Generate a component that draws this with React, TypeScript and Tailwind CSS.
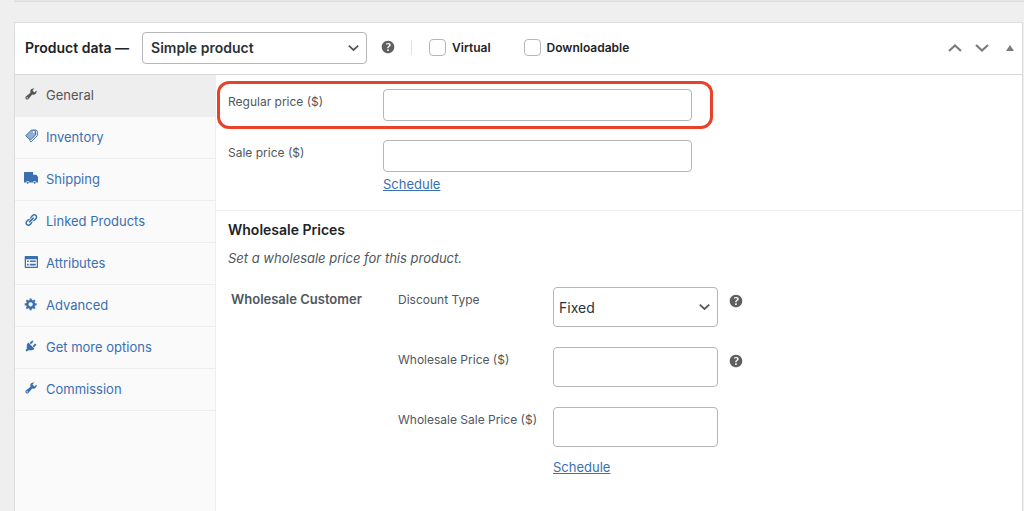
import React from "react";

const WRENCH =
  "M16.68 9.77c-1.34 1.34-3.3 1.67-4.95.99l-5.41 6.52c-.99.99-2.59.99-3.58 0s-.99-2.59 0-3.57l6.52-5.42c-.68-1.65-.35-3.61.99-4.95 1.28-1.28 3.12-1.62 4.72-1.06l-2.89 2.89 2.82 2.82 2.86-2.87c.53 1.58.18 3.39-1.08 4.65zM3.81 16.21c.4.39 1.04.39 1.43 0 .4-.4.4-1.04 0-1.43-.39-.4-1.03-.4-1.43 0-.39.39-.39 1.03 0 1.43z";

const tabs = [
  { name: "General", active: true, icon: <path d={WRENCH} /> },
  {
    name: "Inventory",
    icon: (
      <>
        <path d="M10.500 1.500H15L16.500 3v5.500L9 16 2.500 9.500z" opacity=".55" />
        <path
          d="M10.500 1.500H15L16.500 3v5.500L9 16 2.500 9.500zM15 1.500h2.500L19 3v6.500L10 18.500l-2-2"
          fill="none"
          stroke="currentColor"
          strokeWidth="1.400"
        />
        <circle cx="14" cy="4.300" r="1.300" fill="#fafafa" />
      </>
    ),
  },
  {
    name: "Shipping",
    icon: (
      <>
        <path d="M.5 1.500h12.500v3.800h4.700L20 8.500v8h-2.500a2.300 2.300 0 0 0-4.600 0H7.500a2.300 2.300 0 0 0-4.600 0H0V2z" />
        <circle cx="5.200" cy="16.800" r="1.500" />
        <circle cx="15.200" cy="16.800" r="1.500" />
      </>
    ),
  },
  {
    name: "Linked Products",
    icon: (
      <path d="M17.74 2.76c1.68 1.69 1.68 4.41 0 6.1l-1.53 1.52c-1.12 1.12-2.7 1.47-4.14 1.09l2.62-2.61.76-.77.76-.76c.84-.84.84-2.2 0-3.04-.84-.85-2.2-.85-3.04 0l-.77.76-3.38 3.38c-.37-1.44-.02-3.02 1.1-4.14l1.52-1.53c1.69-1.68 4.42-1.68 6.1 0zM8.59 13.43l5.34-5.34c.42-.42.42-1.1 0-1.52-.44-.43-1.13-.39-1.53 0l-5.33 5.34c-.42.42-.42 1.1 0 1.52.44.43 1.13.39 1.52 0zm-.76 2.29l4.14-4.15c.38 1.44.03 3.02-1.09 4.14l-1.52 1.53c-1.69 1.68-4.41 1.68-6.1 0-1.68-1.68-1.68-4.42 0-6.1l1.53-1.52c1.12-1.12 2.7-1.47 4.14-1.1l-4.14 4.15c-.85.84-.85 2.2 0 3.05.84.84 2.2.84 3.04 0z" />
    ),
  },
  {
    name: "Attributes",
    icon: (
      <path
        fillRule="evenodd"
        d="M2 1.500h17a1 1 0 0 1 1 1v15a1 1 0 0 1-1 1H2a1 1 0 0 1-1-1v-15a1 1 0 0 1 1-1zm.8 4.500v10.800h15.400V6zM4.300 7.800h2.400v2.300H4.300zm4 0h8.500v2.300H8.300zm-4 4.800h2.400v2.300H4.300zm4 0h8.500v2.300H8.300z"
      />
    ),
  },
  {
    name: "Advanced",
    icon: (
      <path d="M18 12h-2.180c-.17.7-.44 1.350-.81 1.930l1.540 1.540-2.100 2.100-1.540-1.540c-.58.36-1.230.63-1.910.79V19H8v-2.180c-.68-.16-1.330-.43-1.910-.79l-1.540 1.540-2.120-2.120 1.540-1.540c-.36-.58-.63-1.230-.79-1.910H1V9.030h2.170c.16-.7.44-1.350.8-1.940L2.430 5.550l2.100-2.100 1.540 1.540c.58-.37 1.240-.64 1.930-.81V2h3v2.180c.68.16 1.330.43 1.910.79l1.540-1.540 2.120 2.120-1.540 1.540c.36.59.64 1.240.8 1.940H18V12zm-8.500 1.500c1.660 0 3-1.340 3-3s-1.340-3-3-3-3 1.340-3 3 1.340 3 3 3z" />
    ),
  },
  {
    name: "Get more options",
    icon: (
      <path d="M13.11 4.36L9.87 7.6 8 5.73l3.24-3.24c.35-.34 1.05-.2 1.56.32.52.51.66 1.21.31 1.55zm-8 1.77l.91-1.12 9.01 9.01-1.19.84c-.71.71-2.63 1.16-3.82 1.16H6.14L4.9 17.26c-.59.59-1.54.59-2.12 0-.59-.58-.59-1.53 0-2.12l1.24-1.24v-3.88c0-1.13.4-3.19 1.09-3.89zm7.26 3.97l3.24-3.24c.34-.35 1.04-.21 1.55.31.52.51.66 1.21.31 1.55l-3.24 3.25z" />
    ),
  },
  { name: "Commission", icon: <path d={WRENCH} /> },
];

const INPUT = "block rounded-[4px] border border-[#b4b6b9] bg-white px-2 outline-none";

const HelpTip = () => (
  <svg viewBox="0 0 20 20" className="h-[18px] w-[18px] shrink-0 fill-[#5f5f5f]" role="img">
    <path d="M17 10c0-3.870-3.140-7-7-7-3.870 0-7 3.130-7 7s3.130 7 7 7c3.860 0 7-3.130 7-7zm-6.300 1.480H9.140v-.43c0-.38.08-.7.24-.98s.46-.57.88-.89c.41-.29.68-.53.81-.71.14-.18.2-.39.2-.62 0-.25-.09-.44-.28-.58-.19-.13-.45-.19-.79-.19-.58 0-1.250.15-2 .46l-.64-1.280c.87-.49 1.800-.74 2.770-.74.81 0 1.450.2 1.920.58.48.39.71.91.71 1.550 0 .43-.09.8-.29 1.110-.19.32-.57.67-1.110 1.060-.38.28-.61.49-.71.63-.1.15-.15.34-.15.57v.35zm-1.470 2.740c-.18-.17-.27-.42-.27-.73 0-.33.08-.58.26-.75s.43-.25.77-.25c.32 0 .57.09.75.26s.27.42.27.74c0 .3-.09.55-.27.72-.18.18-.43.27-.75.27-.33 0-.58-.09-.76-.26z" />
  </svg>
);

const Chevron = ({ className, up }: { className?: string; up?: boolean }) => (
  <svg viewBox="0 0 14 8" className={className} fill="none" stroke="currentColor" strokeWidth="2.200">
    <path d={up ? "M1 7l6-5.500L13 7" : "M1 1l6 5.500L13 1"} />
  </svg>
);

const Select = ({ id, value, className }: { id: string; value: string; className: string }) => (
  <div className="relative">
    <select id={id} defaultValue={value} className={`${INPUT} appearance-none text-[#2c3338] ${className}`}>
      <option>{value}</option>
    </select>
    <Chevron className="pointer-events-none absolute top-1/2 right-2 h-[7px] w-[11px] -translate-y-1/2 text-[#555]" />
  </div>
);

const Check = ({ label }: { label: string }) => (
  <label className="flex items-center gap-[6px] text-[12px] font-semibold">
    <input
      type="checkbox"
      className="h-[17px] w-[17px] appearance-none rounded-[4px] border border-[#b4b6b9] bg-white"
    />
    {label}
  </label>
);

const App = () => {
  return (
    <div className="min-h-screen bg-[#efefef] font-[Inter,'Liberation_Sans',sans-serif] text-[#1d2327]">
      <div className="ml-[14px] h-[2px] border-b border-[#dcdcde] bg-[#e6e6e6]" />

      <div className="mt-5 mr-px ml-[14px] flex min-h-[calc(100vh-22px)] flex-col border border-b-0 border-[#dcdcde] bg-white">
        {/* Header */}
        <header className="flex h-[52px] items-center border-b border-[#d5d6d9] pr-2 pb-[2px] pl-[10px]">
          <label htmlFor="product-type" className="text-[14px] font-semibold">
            Product data —
          </label>
          <div className="ml-[13px]">
            <Select id="product-type" value="Simple product" className="h-8 w-[225px] text-[14px] font-semibold" />
          </div>
          <div className="mb-[2px] ml-3">
            <HelpTip />
          </div>
          <div className="mr-[17px] ml-[14px] h-[15px] w-px bg-[#e2e2e2]" />
          <Check label="Virtual" />
          <div className="w-[33px]" />
          <Check label="Downloadable" />
          <div className="ml-auto flex items-center gap-[13px] text-[#787c82]">
            <button aria-label="Move up">
              <Chevron up className="h-2 w-[14px]" />
            </button>
            <button aria-label="Move down">
              <Chevron className="h-2 w-[14px]" />
            </button>
            <button aria-label="Toggle panel" className="ml-1">
              <svg viewBox="0 0 8 6" className="h-[6px] w-2 fill-current">
                <path d="M4 0l4 6H0z" />
              </svg>
            </button>
          </div>
        </header>

        <div className="flex flex-1">
          {/* Tabs */}
          <nav className="w-[201px] shrink-0 border-r border-[#eee] bg-[#fafafa]">
            {tabs.map((tab) => (
              <a
                key={tab.name}
                href="#"
                className={`flex h-[42px] items-center gap-2 border-b border-[#eee] pl-[9px] text-[13px] ${
                  tab.active ? "bg-[#eee] text-[#555]" : "text-[#3a6fb0]"
                }`}
              >
                <svg viewBox="0 0 20 20" className="mb-1 h-[14px] w-[14px] fill-current">
                  {tab.icon}
                </svg>
                {tab.name}
              </a>
            ))}
          </nav>

          {/* Panel */}
          <main className="min-w-0 flex-1 text-[12px] text-[#50575e]">
            <section className="border-b border-[#eee] pt-[6px] pb-[14px] pl-px">
              <div className="flex w-fit rounded-[12px] border-3 border-[#e8432a] py-[5px] pr-[18px] pl-2">
                <label htmlFor="regular-price" className="w-[155px] leading-[26px]">
                  Regular price ($)
                </label>
                <input id="regular-price" type="text" className={`${INPUT} h-8 w-[309px]`} />
              </div>
              <div className="flex pt-[11px] pl-[11px]">
                <label htmlFor="sale-price" className="w-[155px] leading-[26px]">
                  Sale price ($)
                </label>
                <div>
                  <input id="sale-price" type="text" className={`${INPUT} h-8 w-[309px]`} />
                  <a href="#" className="block text-[13px] leading-6 text-[#3a6fb0] underline">
                    Schedule
                  </a>
                </div>
              </div>
            </section>

            <section className="px-3 pt-[7px]">
              <h2 className="text-[14px] leading-6 font-semibold text-[#1d2327]">Wholesale Prices</h2>
              <p className="mt-1 text-[13px] leading-6 italic">Set a wholesale price for this product.</p>

              <div className="mt-[17px] flex pl-[3px]">
                <h3 className="w-[167px] text-[13px] leading-6 font-semibold">Wholesale Customer</h3>
                <div className="flex flex-col gap-5">
                  <div className="flex">
                    <label htmlFor="discount-type" className="w-[155px] leading-[26px]">
                      Discount Type
                    </label>
                    <Select id="discount-type" value="Fixed" className="h-10 w-[165px] pl-[5px] text-[14px]" />
                    <div className="mt-[5px] ml-[9px]">
                      <HelpTip />
                    </div>
                  </div>
                  <div className="flex">
                    <label htmlFor="wholesale-price" className="w-[155px] leading-[26px]">
                      Wholesale Price ($)
                    </label>
                    <input id="wholesale-price" type="text" className={`${INPUT} h-10 w-[165px]`} />
                    <div className="mt-[5px] ml-[9px]">
                      <HelpTip />
                    </div>
                  </div>
                  <div className="flex">
                    <label htmlFor="wholesale-sale-price" className="w-[155px] leading-[26px]">
                      Wholesale Sale Price ($)
                    </label>
                    <div>
                      <input id="wholesale-sale-price" type="text" className={`${INPUT} h-10 w-[165px]`} />
                      <a href="#" className="mt-2 block text-[13px] leading-6 text-[#3a6fb0] underline">
                        Schedule
                      </a>
                    </div>
                  </div>
                </div>
              </div>
            </section>
          </main>
        </div>
      </div>
    </div>
  );
};

export default App;
